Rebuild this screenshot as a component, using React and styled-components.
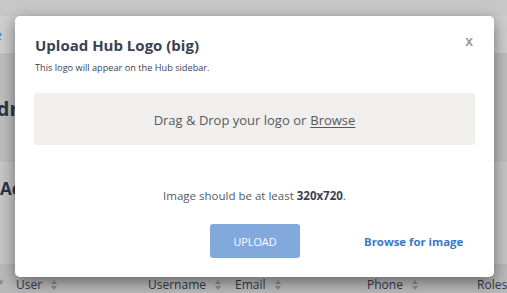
import React from "react";
import styled, { createGlobalStyle } from "styled-components";

const Global = createGlobalStyle`
  html, body { margin: 0; padding: 0; }
  body {
    width: 507px; height: 293px; overflow: hidden;
    font-family: "Open Sans", "Noto Sans", sans-serif;
    background: #c8c8c8;
  }
`;

const Page = styled.div`
  position: relative;
  width: 507px;
  height: 293px;
  overflow: hidden;
  display: flex;
  flex-direction: column;
`;

const Band = styled.div`
  height: ${(p) => p.$h}px;
  background: ${(p) => p.$bg};
  border-bottom: ${(p) => (p.$line ? `1px solid ${p.$line}` : "none")};
  display: flex;
  align-items: ${(p) => p.$align || "center"};
  box-sizing: border-box;
  flex-shrink: 0;
  overflow: hidden;
`;

const BgLink = styled.span`
  color: #3a78c3;
  font-size: 14px;
  margin-left: -6px;
`;

const BgHeading = styled.span`
  color: #2b3547;
  font-weight: 700;
  font-size: ${(p) => p.$size}px;
  margin-left: ${(p) => p.$ml}px;
  margin-top: ${(p) => p.$mt || 0}px;
  white-space: nowrap;
`;

const TableHead = styled.div`
  flex: 1;
  background: #b9b9b9;
  font-size: 12px;
  color: #2f3a4c;
  position: relative;
`;

const Col = styled.div`
  position: absolute;
  left: ${(p) => p.$x}px;
  top: 11px;
  display: flex;
  align-items: center;
  gap: 9px;
  white-space: nowrap;
`;

const Caret = styled.span`
  color: #8a8a8a;
  font-size: 8px;
`;

const SortIcon = () => (
  <svg width="6" height="10" viewBox="0 0 6 10">
    <path d="M3 0 L6 4 L0 4 Z" fill="#8a8a8a" />
    <path d="M3 10 L6 6 L0 6 Z" fill="#8a8a8a" />
  </svg>
);

const Modal = styled.div`
  position: absolute;
  left: 15px;
  top: 16px;
  width: 479px;
  height: 261px;
  background: #fff;
  border-radius: 5px;
  box-shadow: 0 5px 15px rgba(0, 0, 0, 0.45);
  box-sizing: border-box;
  padding: 18px 19px 0 19px;
  display: flex;
  flex-direction: column;
`;

const Header = styled.div`
  display: flex;
  justify-content: space-between;
  align-items: flex-start;
  padding-left: 1px;
`;

const Title = styled.h2`
  margin: 0;
  font-size: 15px;
  line-height: 22px;
  font-weight: 700;
  color: #3a4252;
`;

const Close = styled.button`
  border: 0;
  background: none;
  padding: 0;
  margin: 0 2px 0 0;
  font-family: "Liberation Sans", sans-serif;
  font-weight: 700;
  font-size: 14px;
  color: #9a9a9a;
  line-height: 14px;
  cursor: pointer;
`;

const Subtitle = styled.p`
  margin: 6px 0 0 1px;
  font-size: 9.2px;
  line-height: 12px;
  color: #3a4252;
`;

const DropZone = styled.div`
  margin-top: 19px;
  height: 52px;
  background: #f0efee;
  border-radius: 3px;
  display: flex;
  align-items: center;
  justify-content: center;
  font-size: 13px;
  color: #555a60;
  padding-top: 2px;
  box-sizing: border-box;
`;

const Underline = styled.span`
  text-decoration: underline;
  text-underline-offset: 2px;
  margin-left: 4px;
`;

const Hint = styled.p`
  margin: 43px 0 0 0;
  text-align: center;
  font-size: 11.5px;
  line-height: 16px;
  color: #555a60;
`;

const Strong = styled.b`
  color: #3a4252;
  font-weight: 700;
`;

const Actions = styled.div`
  margin-top: 20px;
  display: flex;
  align-items: center;
  padding-left: 176px;
`;

const UploadButton = styled.button`
  width: 90px;
  height: 34px;
  border: 0;
  border-radius: 3px;
  background: #82a9dc;
  color: #fff;
  font-family: "Open Sans", sans-serif;
  font-size: 10.8px;
  padding: 0;
`;

const BrowseLink = styled.a`
  margin-left: 64px;
  color: #3a78c3;
  font-size: 11.4px;
  font-weight: 700;
  text-decoration: none;
`;

export default function App() {
  return (
    <>
      <Global />
      <Page>
        <Band $h={16} $bg="#c7c7c7" />
        <Band $h={38} $bg="#cdcdcd" $line="#bdbdbd">
          <BgLink>e</BgLink>
        </Band>
        <Band $h={109} $bg="#bdbdbd" $line="#c9c9c9">
          <BgHeading $size={20} $ml={-17}>Adr</BgHeading>
        </Band>
        <Band $h={102} $bg="#c5c5c5" $line="#b7b7b7" $align="flex-start">
          <BgHeading $size={17} $ml={0} $mt={14}>Ac</BgHeading>
        </Band>
        <TableHead>
          <Col $x={-3}>
            <Caret>▼</Caret>
          </Col>
          <Col $x={16}>
            User <SortIcon />
          </Col>
          <Col $x={148}>
            Username <SortIcon />
          </Col>
          <Col $x={235}>
            Email <SortIcon />
          </Col>
          <Col $x={367}>
            Phone <SortIcon />
          </Col>
          <Col $x={477}>Roles</Col>
        </TableHead>
        <Modal>
          <Header>
            <Title>Upload Hub Logo (big)</Title>
            <Close>x</Close>
          </Header>
          <Subtitle>This logo will appear on the Hub sidebar.</Subtitle>
          <DropZone>
            Drag &amp; Drop your logo or<Underline>Browse</Underline>
          </DropZone>
          <Hint>
            Image should be at least <Strong>320x720</Strong>.
          </Hint>
          <Actions>
            <UploadButton>UPLOAD</UploadButton>
            <BrowseLink href="#">Browse for image</BrowseLink>
          </Actions>
        </Modal>
      </Page>
    </>
  );
}
